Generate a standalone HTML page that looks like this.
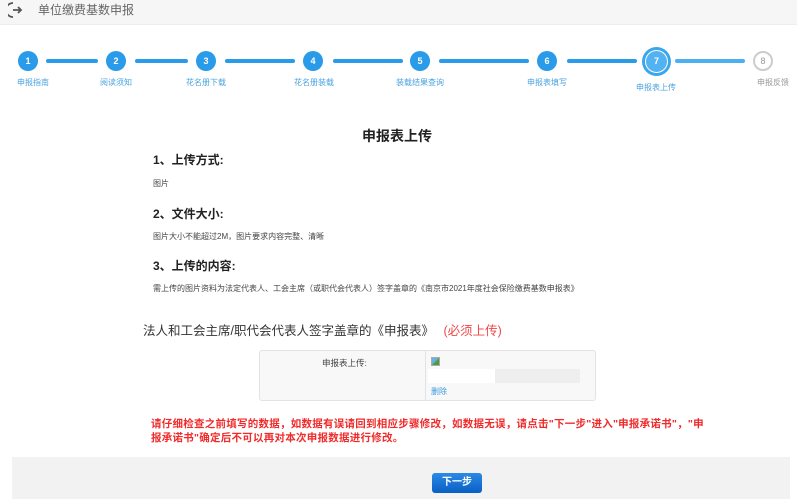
<!DOCTYPE html>
<html><head><meta charset="utf-8"><style>
*{margin:0;padding:0;box-sizing:border-box}
body{width:797px;height:499px;background:#fff;font-family:"Liberation Sans","Noto Sans CJK SC",sans-serif;position:relative;overflow:hidden;color:#333}
.a{position:absolute;white-space:nowrap}
.hdr{position:absolute;left:0;top:0;width:797px;height:25px;background:#f6f6f6;border-bottom:1px solid #eee}
.c{position:absolute;width:20px;height:20px;border-radius:50%;background:#2a9be8;color:#fff;font-size:9px;text-align:center;line-height:20px;font-weight:bold}
.ln{position:absolute;height:4px;background:#2a9be8;border-radius:2px;top:59px}
.lb{position:absolute;font-size:8px;color:#4aa3e0;white-space:nowrap;transform:translateX(-50%)}
.h{font-size:12px;font-weight:bold;color:#222}
.t{font-size:8px;color:#444}
.red{color:#f02a2a;font-size:10.5px;font-weight:bold;letter-spacing:0.25px}
</style></head><body>
<div class="hdr"></div>
<svg class="a" style="left:8px;top:1px" width="18" height="18" viewBox="0 0 18 18"><path d="M5 2 A7 7 0 0 0 5 16" fill="none" stroke="#555" stroke-width="1.8"/><path d="M5 9h8M10 6l3 3-3 3" fill="none" stroke="#555" stroke-width="1.8"/></svg>
<div class="a" style="left:38px;top:1px;font-size:12px;color:#666">单位缴费基数申报</div>

<div class="ln" style="left:46px;width:52px"></div>
<div class="ln" style="left:135px;width:53px"></div>
<div class="ln" style="left:225px;width:70px"></div>
<div class="ln" style="left:333px;width:70px"></div>
<div class="ln" style="left:439px;width:90px"></div>
<div class="ln" style="left:567px;width:70px"></div>
<div class="ln" style="left:675px;width:70px;background:#4ab0f0"></div>

<div class="c" style="left:18px;top:51px">1</div>
<div class="c" style="left:106px;top:51px">2</div>
<div class="c" style="left:196px;top:51px">3</div>
<div class="c" style="left:303px;top:51px">4</div>
<div class="c" style="left:410px;top:51px">5</div>
<div class="c" style="left:537px;top:51px">6</div>
<div class="a" style="left:642px;top:47px;width:29px;height:29px;border-radius:50%;background:#3aa6ee"></div>
<div class="a" style="left:645px;top:50px;width:23px;height:23px;border-radius:50%;border:1.5px solid #fff;background:#52b2f2;color:#fff;font-size:9px;text-align:center;line-height:20px;font-weight:bold">7</div>
<div class="a" style="left:753px;top:51px;width:20px;height:20px;border-radius:50%;border:2px solid #ccc;color:#999;font-size:9px;text-align:center;line-height:16px;background:#fff">8</div>

<div class="lb" style="left:33px;top:77px">申报指南</div>
<div class="lb" style="left:116px;top:77px">阅读须知</div>
<div class="lb" style="left:206px;top:77px">花名册下载</div>
<div class="lb" style="left:314px;top:77px">花名册装载</div>
<div class="lb" style="left:420px;top:77px">装载结果查询</div>
<div class="lb" style="left:547px;top:77px">申报表填写</div>
<div class="lb" style="left:656px;top:82px">申报表上传</div>
<div class="lb" style="left:773px;top:77px;color:#999">申报反馈</div>

<div class="a" style="left:362px;top:126px;font-size:14px;font-weight:bold;color:#222">申报表上传</div>
<div class="a h" style="left:153px;top:151px">1、上传方式:</div>
<div class="a t" style="left:153px;top:178px">图片</div>
<div class="a h" style="left:153px;top:205px">2、文件大小:</div>
<div class="a t" style="left:153px;top:231px">图片大小不能超过2M，图片要求内容完整、清晰</div>
<div class="a h" style="left:153px;top:257px">3、上传的内容:</div>
<div class="a t" style="left:153px;top:283px">需上传的图片资料为法定代表人、工会主席（或职代会代表人）签字盖章的《南京市2021年度社会保险缴费基数申报表》</div>

<div class="a" style="left:143px;top:320px;font-size:12.5px;color:#333">法人和工会主席/职代会代表人签字盖章的《申报表》 <span style="color:#f04848;margin-left:6px">(必须上传)</span></div>

<div class="a" style="left:259px;top:350px;width:337px;height:51px;border:1px solid #e3e3e3;border-radius:3px;background:#f8f8f8"></div>
<div class="a" style="left:425px;top:351px;width:1px;height:49px;background:#e3e3e3"></div>
<div class="a" style="left:322px;top:357px;font-size:8.5px;color:#444">申报表上传:</div>
<div class="a" style="left:431px;top:357px;width:9px;height:9px;background:linear-gradient(135deg,#6ab0e0 40%,#4c9a3c 60%);border:1px solid #aaa"></div>
<div class="a" style="left:428px;top:369px;width:67px;height:14px;background:#fff"></div>
<div class="a" style="left:495px;top:369px;width:85px;height:14px;background:#eee"></div>
<div class="a" style="left:431px;top:386px;font-size:8px;color:#3a9be0">删除</div>

<div class="a red" style="left:151px;top:416px">请仔细检查之前填写的数据，如数据有误请回到相应步骤修改，如数据无误，请点击"下一步"进入"申报承诺书"，"申</div>
<div class="a red" style="left:151px;top:430px">报承诺书"确定后不可以再对本次申报数据进行修改。</div>

<div class="a" style="left:12px;top:457px;width:778px;height:42px;background:#f2f2f2"></div>
<div class="a" style="left:432px;top:473px;width:50px;height:20px;border-radius:3px;background:linear-gradient(#2b8ae6,#0a5fc4);color:#fff;font-size:10px;text-align:center;line-height:20px;font-weight:bold">下一步</div>
</body></html>
